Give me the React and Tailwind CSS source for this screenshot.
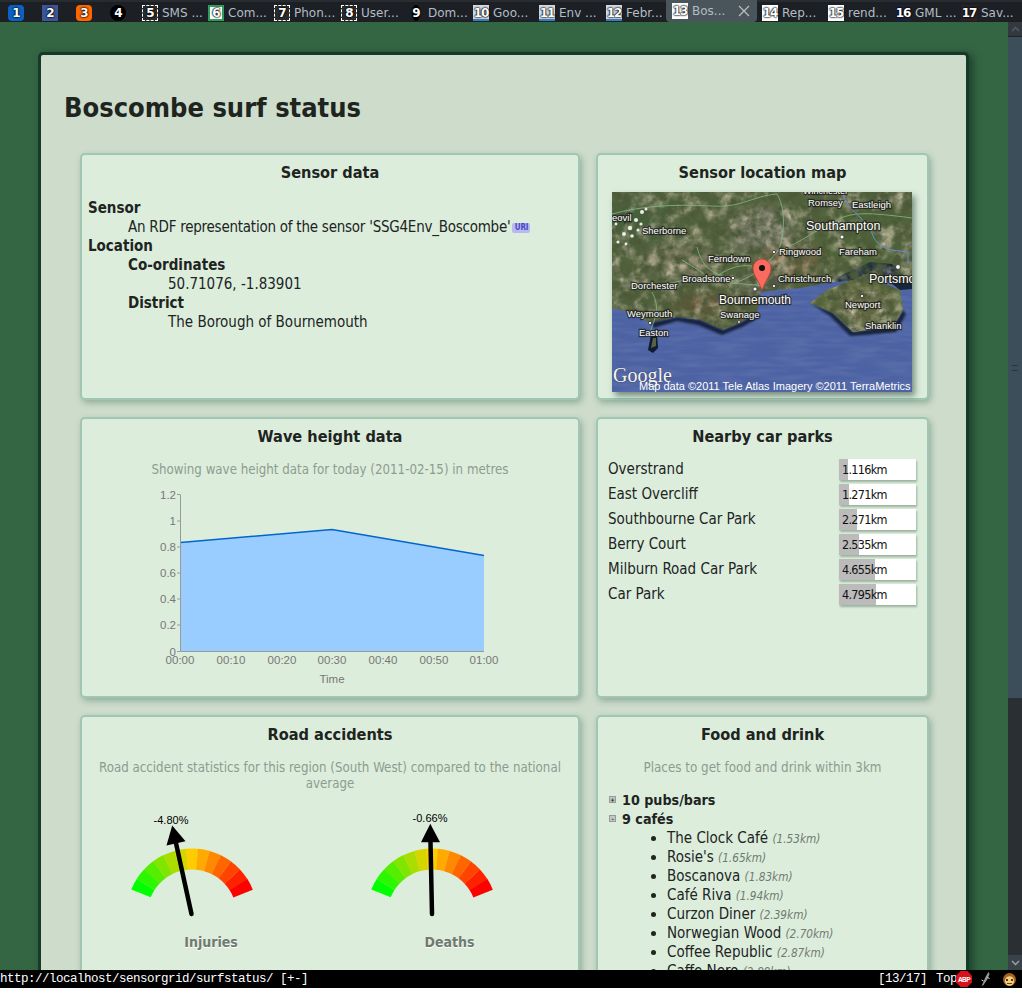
const BODY_FONT = "font-['DejaVu_Sans_Condensed','DejaVu_Sans',sans-serif]";

const tabs = [
  { n: 1, w: 33, pl: 8, icon: 'bg-[#0b62c4] rounded-sm' },
  { n: 2, w: 34, pl: 9, icon: 'bg-[#3b5597]' },
  { n: 3, w: 34, pl: 9, icon: 'bg-[#ff6600] rounded' },
  { n: 4, w: 33, pl: 9, icon: 'bg-black rounded-full' },
  { n: 5, w: 66, pl: 8, label: 'SMS ...', icon: 'bg-[#2a2a2a] border border-dashed border-white' },
  { n: 6, w: 66, pl: 8, label: 'Com...', icon: 'bg-white border-2 border-[#2e9e5b]' },
  { n: 7, w: 67, pl: 8, label: 'Phon...', icon: 'bg-[#2a2a2a] border border-dashed border-white' },
  { n: 8, w: 67, pl: 8, label: 'User...', icon: 'bg-[#2a2a2a] border border-dashed border-white' },
  { n: 9, w: 66, pl: 8, label: 'Dom...', icon: 'bg-black rounded-full scale-x-50' },
  { n: 10, w: 66, pl: 7, label: 'Goo...', icon: 'bg-[#d5d9e2] border-b-2 border-[#2f7fc1]' },
  { n: 11, w: 67, pl: 7, label: 'Env ...', icon: 'bg-[#d5d9e2] border-b-2 border-[#2f7fc1]' },
  { n: 12, w: 67, pl: 7, label: 'Febr...', icon: 'bg-[#d5d9e2] border-b-2 border-[#2f7fc1]' },
  { n: 13, w: 91, pl: 6, label: 'Bos...', active: true, icon: 'bg-white' },
  { n: 14, w: 66, pl: 5, label: 'Rep...', icon: 'bg-white' },
  { n: 15, w: 67, pl: 5, label: 'rend...', icon: 'bg-white' },
  { n: 16, w: 66, pl: 5, label: 'GML ...', icon: 'bg-[#1b2238]' },
  { n: 17, w: 61, pl: 5, label: 'Sav...', icon: 'bg-[#2a2226]' },
];

const carParks = [
  ['Overstrand', '1.116km', 9],
  ['East Overcliff', '1.271km', 10],
  ['Southbourne Car Park', '2.271km', 18],
  ['Berry Court', '2.535km', 20],
  ['Milburn Road Car Park', '4.655km', 36],
  ['Car Park', '4.795km', 37],
];

const cafes = [
  ['The Clock Café', '(1.53km)'],
  ["Rosie's", '(1.65km)'],
  ['Boscanova', '(1.83km)'],
  ['Café Riva', '(1.94km)'],
  ['Curzon Diner', '(2.39km)'],
  ['Norwegian Wood', '(2.70km)'],
  ['Coffee Republic', '(2.87km)'],
  ['Caffe Nero', '(2.88km)'],
];

const Tab = ({ tab }) => (
  <div
    className={`flex shrink-0 gap-[4px] ${tab.active ? 'items-center -mt-[2px] h-[22px] bg-[#4a545b] rounded-b-sm' : 'items-end h-[20px] pb-[1px]'}`}
    style={{ width: tab.w, paddingLeft: tab.pl }}
  >
    <div className="relative w-[16px] h-[16px] shrink-0">
      <div className={`absolute inset-0 ${tab.icon}`} />
      <span className="absolute inset-0 flex items-center justify-center text-[12px] font-bold tracking-[-1px] text-white font-['DejaVu_Sans',sans-serif] [text-shadow:0_0_2px_#000,0_0_2px_#000,0_0_1px_#000]">
        {tab.n}
      </span>
    </div>
    {tab.label && (
      <span className="text-[12px] leading-[16px] text-[#b4bcc4] whitespace-nowrap font-['DejaVu_Sans',sans-serif]">{tab.label}</span>
    )}
    {tab.active && (
      <svg width="14" height="14" viewBox="0 0 14 14" className="ml-[8px] shrink-0" stroke="#b6bcc0" strokeWidth="1.3">
        <path d="M2 2 12 12M12 2 2 12" />
      </svg>
    )}
  </div>
);

const Panel = ({ title, children, className = '' }) => (
  <section
    className={`rounded-[5px] border-2 border-[#a2c6b4] bg-[#ddeddc] shadow-[2px_3px_6px_rgba(40,90,70,0.35)] ${className}`}
  >
    <h2 className="pt-[6px] h-[32px] text-center text-[16.2px] leading-[24px] font-bold text-[#20241f]">{title}</h2>
    {children}
  </section>
);

const MapLabel = ({ x, y, size = 9.5, anchor = 'start', children }) => (
  <text
    x={x}
    y={y}
    fontSize={size}
    textAnchor={anchor}
    fontFamily="Liberation Sans, sans-serif"
    fill="#fff"
    stroke="#1b1d18"
    strokeWidth="2.4"
    strokeOpacity="0.75"
    paintOrder="stroke"
  >
    {children}
  </text>
);

const LAND = 'M0 0H300V91L241 88 215 91 188 96 165 98 148 100 145 121 128 131 111 138 88 128 65 125 38 131 21 121 0 116Z';
const WIGHT = 'M198 111 215 98 240 88 262 88 288 98 291 118 281 135 255 138 241 140 221 121 205 114Z';

const SensorMap = () => (
  <div className="relative ml-[14px] w-[300px] h-[200px] shadow-[3px_4px_6px_rgba(20,50,40,0.5)] overflow-hidden">
    <svg width="300" height="200" viewBox="0 0 300 200" className="block">
      <defs>
        <filter id="land-noise" x="0" y="0" width="100%" height="100%">
          <feTurbulence type="fractalNoise" baseFrequency="0.11" numOctaves="4" seed="8" />
          <feColorMatrix values="0 0 0 0 0.07  0 0 0 0 0.1  0 0 0 0 0.04  2.4 0 0 0 -0.8" />
        </filter>
        <filter id="land-light" x="0" y="0" width="100%" height="100%">
          <feTurbulence type="fractalNoise" baseFrequency="0.06" numOctaves="4" seed="21" />
          <feColorMatrix values="0 0 0 0 0.62  0 0 0 0 0.55  0 0 0 0 0.42  0 2.2 0 0 -0.95" />
        </filter>
        <filter id="sea-noise" x="0" y="0" width="100%" height="100%">
          <feTurbulence type="fractalNoise" baseFrequency="0.03 0.2" numOctaves="2" seed="3" />
          <feColorMatrix values="0 0 0 0 0.2  0 0 0 0 0.27  0 0 0 0 0.5  0.6 0 0 0 -0.22" />
        </filter>
        <filter id="soft"><feGaussianBlur stdDeviation="7" /></filter>
        <filter id="tiny"><feGaussianBlur stdDeviation="1.2" /></filter>
        <filter id="speck"><feGaussianBlur stdDeviation="0.6" /></filter>
        <clipPath id="land-clip">
          <path d={LAND} />
          <path d={WIGHT} />
        </clipPath>
      </defs>
      <rect width="300" height="200" fill="#4d62a3" />
      <rect width="300" height="200" filter="url(#sea-noise)" />
      <path d={LAND} fill="#53633d" />
      <path d="M215 91 241 88 262 78 288 98 300 97V91L280 72 258 70 232 82Z" fill="#17263a" />
      <path d="M198 111 221 121 241 140 255 138 281 135 291 118 294 122 284 140 254 143 238 144 218 124Z" fill="#16243c" filter="url(#tiny)" />
      <path d="M38 131 65 125 88 128 111 138 128 131 145 121 148 125 130 135 110 143 86 133 65 129 42 136Z" fill="#16243c" filter="url(#tiny)" />
      <path d={WIGHT} fill="#5a6a3c" />
      <g clipPath="url(#land-clip)">
        <g filter="url(#soft)">
          <ellipse cx="150" cy="40" rx="30" ry="24" fill="#80806f" />
          <ellipse cx="178" cy="68" rx="30" ry="16" fill="#7c6644" />
          <ellipse cx="70" cy="70" rx="38" ry="18" fill="#7d7a60" />
          <ellipse cx="92" cy="112" rx="34" ry="9" fill="#6c5236" />
          <ellipse cx="250" cy="112" rx="28" ry="16" fill="#6d6a45" />
          <ellipse cx="245" cy="45" rx="40" ry="25" fill="#4d6535" />
          <ellipse cx="30" cy="30" rx="30" ry="25" fill="#45603a" />
          <ellipse cx="150" cy="92" rx="26" ry="7" fill="#4c4c4c" />
        </g>
        <rect width="300" height="200" filter="url(#land-light)" />
        <rect width="300" height="200" filter="url(#land-noise)" />
      </g>
      <path d="M36 158 39 143 45 143 46 156 41 161Z" fill="#0f1a2e" filter="url(#speck)" />
      <path d="M39 156 41 146 44 146 44 154Z" fill="#5a5f48" />
      <g fill="none" stroke="#86b886" strokeWidth="0.9" opacity="0.9">
        <path d="M0 22C30 14 60 12 100 14 130 16 140 4 165 2 175 18 172 50 165 60 150 78 140 85 120 92" />
        <path d="M165 60C190 50 200 40 225 28 240 20 255 20 300 26" />
        <path d="M70 68C90 80 92 82 100 88 120 92 140 92 150 94" />
        <path d="M50 94C70 88 85 84 100 88 112 78 125 72 140 74" />
        <path d="M40 100C48 116 44 124 38 140" />
        <path d="M85 55C90 75 100 80 110 84" />
      </g>
      <path d="M230 0C236 22 255 24 262 46 270 60 285 58 296 60V72" fill="none" stroke="#6f8ad6" strokeWidth="1" />
      <g fill="#ececec" filter="url(#speck)">
        <circle cx="30" cy="20" r="2" /><circle cx="34" cy="17" r="1.5" /><circle cx="24" cy="28" r="2" />
        <circle cx="29" cy="32" r="1.6" /><circle cx="18" cy="36" r="2.2" /><circle cx="26" cy="38" r="1.5" />
        <circle cx="12" cy="42" r="2" /><circle cx="20" cy="44" r="1.8" /><circle cx="6" cy="50" r="1.6" />
        <circle cx="14" cy="52" r="1.4" /><circle cx="4" cy="32" r="1.4" /><circle cx="9" cy="26" r="1.2" />
      </g>
      <g fill="#fff" stroke="#222" strokeWidth="0.7">
        <circle cx="143" cy="97" r="2" /><circle cx="162" cy="60" r="1.6" /><circle cx="230" cy="45" r="2" />
        <circle cx="286" cy="75" r="2.4" /><circle cx="121" cy="86" r="1.6" /><circle cx="162" cy="94" r="1.6" />
        <circle cx="38" cy="131" r="1.6" /><circle cx="127" cy="130" r="1.4" /><circle cx="250" cy="104" r="1.6" />
      </g>
      <MapLabel x="191" y="2" size="9">Winchester</MapLabel>
      <MapLabel x="196" y="14">Romsey</MapLabel>
      <MapLabel x="240" y="16">Eastleigh</MapLabel>
      <MapLabel x="0" y="29">eovil</MapLabel>
      <MapLabel x="30" y="42">Sherborne</MapLabel>
      <MapLabel x="194" y="38" size="12.5">Southampton</MapLabel>
      <MapLabel x="227" y="63">Fareham</MapLabel>
      <MapLabel x="167" y="63">Ringwood</MapLabel>
      <MapLabel x="96" y="70">Ferndown</MapLabel>
      <MapLabel x="70" y="90">Broadstone</MapLabel>
      <MapLabel x="19" y="97">Dorchester</MapLabel>
      <MapLabel x="166" y="90">Christchurch</MapLabel>
      <MapLabel x="257" y="91" size="12.5">Portsmouth</MapLabel>
      <MapLabel x="107" y="112" size="12">Bournemouth</MapLabel>
      <MapLabel x="108" y="126">Swanage</MapLabel>
      <MapLabel x="15" y="125">Weymouth</MapLabel>
      <MapLabel x="27" y="144">Easton</MapLabel>
      <MapLabel x="233" y="116">Newport</MapLabel>
      <MapLabel x="253" y="137">Shanklin</MapLabel>
      <path d="M150 99C146 86 141 84 141 76A9 9 0 0 1 159 76C159 84 154 86 150 99Z" fill="#fb6a5e" stroke="#a8322a" strokeWidth="0.6" />
      <circle cx="150" cy="76" r="3" fill="#111" />
      <text x="1" y="190" fontSize="20" fontFamily="Liberation Serif, serif" fill="#f4f4f4" stroke="#333" strokeWidth="0.5" paintOrder="stroke">Google</text>
      <text x="27" y="198" fontSize="11" fontFamily="Liberation Sans, sans-serif" fill="#fff">Map data ©2011 Tele Atlas  Imagery ©2011 TerraMetrics</text>
    </svg>
  </div>
);

const WaveChart = () => {
  const xTicks = [
    ['00:00', 40], ['00:10', 91], ['00:20', 142], ['00:30', 192], ['00:40', 243], ['00:50', 294], ['01:00', 344],
  ];
  const yTicks = [['0', 166.5], ['0.2', 140], ['0.4', 114], ['0.6', 88], ['0.8', 62], ['1', 36], ['1.2', 9.5]];
  return (
    <svg width="370" height="210" viewBox="0 0 370 210" className="block" fontFamily="Liberation Sans, sans-serif">
      <path d="M40.5 57.5 192 44.5 344 70.5V166.5H40.5Z" fill="#99ccff" />
      <path d="M40.5 57.5 192 44.5 344 70.5" fill="none" stroke="#0066cc" strokeWidth="1.5" />
      <path d="M40.5 9.5V166.5H344" fill="none" stroke="#999" />
      {yTicks.map(([label, y]) => (
        <g key={label}>
          <path d={`M37 ${y}H40`} stroke="#999" />
          <text x="36" y={y + 4} fontSize="11.5" textAnchor="end" fill="#777">{label}</text>
        </g>
      ))}
      {xTicks.map(([label, x]) => (
        <text key={label} x={x} y="179" fontSize="11.5" textAnchor="middle" fill="#777">{label}</text>
      ))}
      <text x="192" y="198" fontSize="11.5" textAnchor="middle" fill="#777">Time</text>
    </svg>
  );
};

const segmentColour = (i) => {
  if (i <= 6) return `rgb(${Math.round((255 * i) / 6)},${Math.round(255 - (51 * i) / 6)},0)`;
  return `rgb(255,${Math.round(204 - (204 * (i - 6)) / 6)},0)`;
};

const polar = (r, deg) => {
  const a = (deg * Math.PI) / 180;
  return [70 + r * Math.sin(a), 72 - r * Math.cos(a)];
};

// 13 wedges from -68 to +68 degrees round the needle foot
const Gauge = ({ value, tip, base, labelX, labelY }) => (
  <svg width="140" height="91" viewBox="0 0 140 91" className="block overflow-visible" fontFamily="Liberation Sans, sans-serif">
    {Array.from({ length: 13 }).map((_, i) => {
      const from = -68 + (136 / 13) * i;
      const to = from + 136 / 13 + 0.2;
      const [x1, y1] = polar(65.5, from);
      const [x2, y2] = polar(65.5, to);
      const [x3, y3] = polar(44.5, to);
      const [x4, y4] = polar(44.5, from);
      return (
        <path
          key={i}
          d={`M${x1} ${y1}A65.5 65.5 0 0 1 ${x2} ${y2}L${x3} ${y3}A44.5 44.5 0 0 0 ${x4} ${y4}Z`}
          fill={segmentColour(i)}
        />
      );
    })}
    <path d={`M${base.foot} 72L${(base.a[0] + base.b[0]) / 2} ${(base.a[1] + base.b[1]) / 2}`} stroke="#000" strokeWidth="4.5" strokeLinecap="round" />
    <path d={`M${tip[0]} ${tip[1]}L${base.a[0]} ${base.a[1]}L${base.b[0]} ${base.b[1]}Z`} fill="#000" />
    <text x={labelX} y={labelY} fontSize="11" textAnchor="middle" fill="#000">{value}</text>
  </svg>
);

const StatusIcons = () => (
  <div className="flex items-center">
    <svg width="16" height="16" viewBox="0 0 12 12" className="-ml-[1px]">
      <path d="M3.5 0H8.5L12 3.5V8.5L8.5 12H3.5L0 8.5V3.5Z" fill="#d8121a" />
      <text x="6" y="8" fontSize="5" fontWeight="700" textAnchor="middle" fill="#fff" fontFamily="Liberation Sans, sans-serif">ABP</text>
    </svg>
    <svg width="13" height="16" viewBox="0 0 10 16" className="ml-[7px]">
      <path d="M8 1 5 6 2 13 1 15 3 14 7 8 9 3Z" fill="#9a9a9a" />
      <path d="M7 6 9 8M3 10 1 9" stroke="#ddd" strokeWidth="1" />
    </svg>
    <svg width="15" height="17" viewBox="0 0 15 16" className="ml-[10px] mr-[5px]">
      <circle cx="7.5" cy="8" r="6.5" fill="#a8621c" />
      <ellipse cx="7.5" cy="9.5" rx="4.6" ry="4.8" fill="#f2cd7b" />
      <path d="M5 7.5V9.5M10 7.5V9.5" stroke="#000" strokeWidth="1.4" />
      <path d="M5 12H10" stroke="#7a3d10" strokeWidth="1" />
    </svg>
  </div>
);

const Scrollbar = () => (
  <div className="flex flex-col w-[14px] shrink-0 bg-[#2a2f33]">
    <div className="h-[15px] bg-[#33393e] flex items-center justify-center border-b border-[#1f2327]">
      <svg width="9" height="6" viewBox="0 0 9 6"><path d="M1 5 4.5 1.5 8 5" fill="none" stroke="#555d63" strokeWidth="1.4" /></svg>
    </div>
    <div className="h-[661px] bg-[#3d4e5b] flex items-center justify-center">
      <div className="w-[6px] h-[6px] border-y border-[#2a3640]" />
    </div>
    <div className="flex-1" />
    <div className="h-[15px] bg-[#3a4249] flex items-center justify-center">
      <svg width="9" height="6" viewBox="0 0 9 6"><path d="M1 1 4.5 4.5 8 1" fill="none" stroke="#9aa3aa" strokeWidth="1.4" /></svg>
    </div>
  </div>
);

const gaugeLabel = 'text-[14px] leading-[18px] font-bold text-[#6f7a70] [text-shadow:0_1px_0_#fff] text-center';

export default function App() {
  return (
    <div className={`w-[1022px] h-[1003px] bg-white overflow-hidden flex flex-col ${BODY_FONT}`}>
      {/* tab bar */}
      <div className="flex h-[22px] shrink-0 bg-[#1c1f24] border-t-2 border-[#282b30]">
        {tabs.map((tab) => <Tab key={tab.n} tab={tab} />)}
      </div>

      {/* page */}
      <div className="flex h-[948px] shrink-0 overflow-hidden">
        <div className="flex-1 min-w-0 bg-[#356644] pt-[30px] pl-[38px]">
          <main className="w-[931px] h-[1200px] rounded-[5px] border-[3px] border-[#143a28] bg-[#cddccb] shadow-[4px_2px_8px_rgba(10,40,25,0.6)] pl-[23px] text-[#20241f]">
            <h1 className="pt-[32px] h-[98px] text-[27px] leading-[42px] font-bold">Boscombe surf status</h1>
            <div className="ml-[16px] grid grid-cols-[500px_333px] grid-rows-[247px_281px_auto] gap-x-[16px] gap-y-[17px]">
              <Panel title="Sensor data">
                <dl className="mt-[12px] px-[6px] text-[15px] leading-[19px]">
                  <dt className="font-bold">Sensor</dt>
                  <dd className="ml-[40px] flex items-center tracking-[-0.24px]">
                    An RDF representation of the sensor 'SSG4Env_Boscombe'
                    <span className="ml-[2px] h-[10px] w-[18px] rounded-[2px] bg-[#b9b9f2] text-[8px] leading-[10px] font-bold text-center text-[#4a4ac0]">URI</span>
                  </dd>
                  <dt className="font-bold">Location</dt>
                  <dd className="ml-[40px]">
                    <dl>
                      <dt className="font-bold">Co-ordinates</dt>
                      <dd className="ml-[40px]">50.71076, -1.83901</dd>
                      <dt className="font-bold">District</dt>
                      <dd className="ml-[40px]">The Borough of Bournemouth</dd>
                    </dl>
                  </dd>
                </dl>
              </Panel>

              <Panel title="Sensor location map">
                <div className="mt-[5px]"><SensorMap /></div>
              </Panel>

              <Panel title="Wave height data">
                <p className="mt-[10px] text-center text-[13.2px] leading-[18px] text-[#8d9c90]">
                  Showing wave height data for today (2011-02-15) in metres
                </p>
                <div className="ml-[58px] mt-[6px]"><WaveChart /></div>
              </Panel>

              <Panel title="Nearby car parks">
                <ul className="mt-[8px] pl-[10px] pr-[11px]">
                  {carParks.map(([name, dist, fill]) => (
                    <li key={name} className="flex items-center justify-between h-[21px] mb-[4px] text-[15px]">
                      <span>{name}</span>
                      <div className="relative w-[77px] h-[21px] bg-white shadow-[1px_2px_2px_rgba(60,90,70,0.4)]">
                        <div className="h-full bg-[#bbbbbb]" style={{ width: fill }} />
                        <span className="absolute left-[3px] top-0 text-[12.5px] tracking-[-0.7px] leading-[21px] text-[#111]">{dist}</span>
                      </div>
                    </li>
                  ))}
                </ul>
              </Panel>

              <Panel title="Road accidents" className="h-[400px]">
                <p className="mt-[11px] px-[14px] text-center text-[13.2px] leading-[16px] text-[#8d9c90]">
                  Road accident statistics for this region (South West) compared to the national average
                </p>
                <div className="flex mt-[50px] pl-[40px] gap-[100px]">
                  <div className="w-[140px]">
                    <Gauge value="-4.80%" tip={[50.2, -16.5]} base={{ foot: 69.5, a: [44.5, 3.5], b: [63.5, -0.8] }} labelX="49" labelY="-18" />
                    <div className={`pl-[38px] ${gaugeLabel}`}>Injuries</div>
                  </div>
                  <div className="w-[140px]">
                    <Gauge value="-0.66%" tip={[68.3, -18.2]} base={{ foot: 70, a: [59, 0.2], b: [78, 0.2] }} labelX="68" labelY="-20" />
                    <div className={`pl-[35px] ${gaugeLabel}`}>Deaths</div>
                  </div>
                </div>
              </Panel>

              <Panel title="Food and drink" className="h-[400px]">
                <p className="mt-[11px] text-center text-[13.3px] leading-[16px] text-[#8d9c90]">
                  Places to get food and drink within 3km
                </p>
                <div className="mt-[15px] pl-[11px] text-[15px] leading-[19px]">
                  <div className="flex items-center font-bold text-[14.2px]">
                    <span className="mr-[6px] -mt-[3px] w-[7px] h-[7px] bg-[#c2c8c2] border border-[#999] text-[6px] leading-[5px] text-center">+</span>
                    10 pubs/bars
                  </div>
                  <div className="flex items-center font-bold text-[14.2px]">
                    <span className="mr-[6px] -mt-[3px] w-[7px] h-[7px] bg-[#c2c8c2] border border-[#999] text-[6px] leading-[5px] text-center">-</span>
                    9 cafés
                  </div>
                  <ul className="ml-[48px] list-disc list-outside pl-[10px]">
                    {cafes.map(([name, dist]) => (
                      <li key={name} className="h-[19px]">
                        {name} <em className="text-[11.7px] leading-none text-[#6f7a70]">{dist}</em>
                      </li>
                    ))}
                  </ul>
                </div>
              </Panel>
            </div>
          </main>
        </div>
        <Scrollbar />
      </div>

      {/* status bar */}
      <div className="flex items-center justify-between h-[18px] shrink-0 bg-black text-white text-[12.5px] tracking-[-0.5px] font-['Liberation_Mono',monospace]">
        <span>http://localhost/sensorgrid/surfstatus/ [+-]</span>
        <div className="flex items-center">
          <span>[13/17]</span>
          <span className="ml-[9px]">Top</span>
          <StatusIcons />
        </div>
      </div>
    </div>
  );
}
